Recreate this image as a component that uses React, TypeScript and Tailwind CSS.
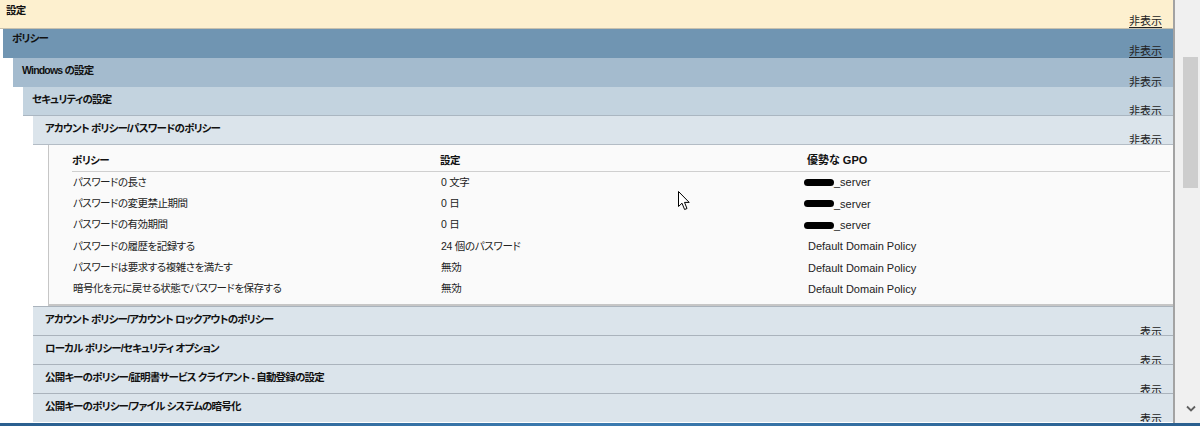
import type { ReactNode } from 'react'

const FONT = "font-['Liberation_Sans','Noto_Sans_CJK_JP',sans-serif] [font-feature-settings:'palt']"

interface PolicyRow {
  name: string
  value: string
  gpo: string
  hidden?: boolean
}

const rows: PolicyRow[] = [
  { name: 'パスワードの長さ', value: '0 文字', gpo: '_server', hidden: true },
  { name: 'パスワードの変更禁止期間', value: '0 日', gpo: '_server', hidden: true },
  { name: 'パスワードの有効期間', value: '0 日', gpo: '_server', hidden: true },
  { name: 'パスワードの履歴を記録する', value: '24 個のパスワード', gpo: 'Default Domain Policy' },
  { name: 'パスワードは要求する複雑さを満たす', value: '無効', gpo: 'Default Domain Policy' },
  { name: '暗号化を元に戻せる状態でパスワードを保存する', value: '無効', gpo: 'Default Domain Policy' },
]

const closed = [
  'アカウント ポリシー/アカウント ロックアウトのポリシー',
  'ローカル ポリシー/セキュリティ オプション',
  '公開キーのポリシー/証明書サービス クライアント - 自動登録の設定',
  '公開キーのポリシー/ファイル システムの暗号化',
]

// one collapsible heading bar of the report
function Bar({
  title,
  label,
  className,
  titleClass,
  labelClass,
}: {
  title: string
  label: string
  className: string
  titleClass: string
  labelClass: string
}) {
  return (
    <div className={`flex h-[29px] justify-between overflow-hidden ${className}`}>
      <span className={`font-bold leading-[12px] text-[10.5px] tracking-[-0.8px] text-[#111] ${titleClass}`}>{title}</span>
      <span className={`mr-[11px] leading-[12px] text-[11px] text-[#222] ${labelClass}`}>{label}</span>
    </div>
  )
}

function Nest({ pad, children }: { pad: string; children: ReactNode }) {
  return <div className={pad}>{children}</div>
}

function Cursor() {
  return (
    <svg className="absolute left-[678px] top-[191px]" width="13" height="20" viewBox="0 0 13 20">
      <path d="M0.5 0.5 L0.5 15.5 L4 12.2 L6.6 18.5 L9 17.5 L6.5 11.4 L11.2 11.4 Z" fill="#fff" stroke="#000" strokeWidth="1" strokeLinejoin="round" />
    </svg>
  )
}

export default function App() {
  return (
    <div className={`relative h-[426px] w-[1200px] overflow-hidden bg-white ${FONT}`}>
      <div className="flex h-[423px]">
        <div className="h-full w-[1173px] overflow-hidden">
          <Bar
            title="設定"
            label="非表示"
            className="border-b border-[#c8c1ae] bg-[#fdf0cf]"
            titleClass="mt-[4px] pl-[6px]"
            labelClass="mt-[15px] underline underline-offset-[2px]"
          />
          <Nest pad="pl-[3px]">
            <Bar
              title="ポリシー"
              label="非表示"
              className="bg-[#7095b2]"
              titleClass="mt-[3px] pl-[9px]"
              labelClass="mt-[16px] underline underline-offset-[2px]"
            />
            <Nest pad="pl-[10px]">
              <Bar
                title="Windows の設定"
                label="非表示"
                className="bg-[#a4bbce]"
                titleClass="mt-[6px] pl-[9px]"
                labelClass="mt-[18px]"
              />
              <Nest pad="pl-[10px]">
                <Bar
                  title="セキュリティの設定"
                  label="非表示"
                  className="border-b border-[#aab6c1] bg-[#c3d3df]"
                  titleClass="mt-[6px] pl-[9px]"
                  labelClass="mt-[18px]"
                />
                <Nest pad="pl-[10px]">
                  <Bar
                    title="アカウント ポリシー/パスワードのポリシー"
                    label="非表示"
                    className="border-b border-[#b3bcc5] bg-[#dbe4eb]"
                    titleClass="mt-[6px] pl-[12px]"
                    labelClass="mt-[18px]"
                  />

                  <div className="ml-[15px] border-b-2 border-l border-[#c6c6c6] bg-[#fafafa] pb-[4px] pt-[5px] text-[#222]">
                    <div className="ml-[23px] mr-[3px] grid h-[22px] grid-cols-[368px_367px_1fr] items-center border-b border-[#cfcfcf] font-bold text-[#111]">
                      <span className="text-[10.5px] tracking-[-0.5px]">ポリシー</span>
                      <span className="text-[10.5px] tracking-[-0.5px]">設定</span>
                      <span className="text-[11px]">優勢な GPO</span>
                    </div>
                    {rows.map((r) => (
                      <div key={r.name} className="ml-[24px] grid h-[21.33px] grid-cols-[368px_367px_1fr] items-center">
                        <span className="text-[10.5px] tracking-[-0.5px]">{r.name}</span>
                        <span className="text-[10.5px] tracking-[-0.3px]">{r.value}</span>
                        <span className="flex items-center text-[11px]">
                          {r.hidden && <span className="-ml-[4px] inline-block h-[7px] w-[30px] rounded-full bg-black" />}
                          {r.gpo}
                        </span>
                      </div>
                    ))}
                  </div>

                  {closed.map((t) => (
                    <Bar
                      key={t}
                      title={t}
                      label="表示"
                      className="border-t border-[#aab3bc] bg-[#dbe4eb]"
                      titleClass="mt-[6px] pl-[12px]"
                      labelClass="mt-[19px]"
                    />
                  ))}
                </Nest>
              </Nest>
            </Nest>
          </Nest>
        </div>

        <div className="w-[2px] bg-[#a3a3a3]" />

        {/* scrollbar */}
        <div className="flex w-[25px] flex-col bg-[#f0f0f0] pl-[8px] pr-[2px]">
          <div className="mt-[57px] h-[131px] bg-[#cdcdcd]" />
          <svg className="mb-[11px] ml-[3px] mt-auto" width="10" height="7" viewBox="0 0 10 7">
            <path d="M1 1.5 L5 5.5 L9 1.5" fill="none" stroke="#606060" strokeWidth="1.8" />
          </svg>
        </div>
      </div>
      <div className="h-[3px] bg-gradient-to-r from-[#2a5f8f] via-[#3c7bb0] to-[#2a5f8f]" />
      <Cursor />
    </div>
  )
}
